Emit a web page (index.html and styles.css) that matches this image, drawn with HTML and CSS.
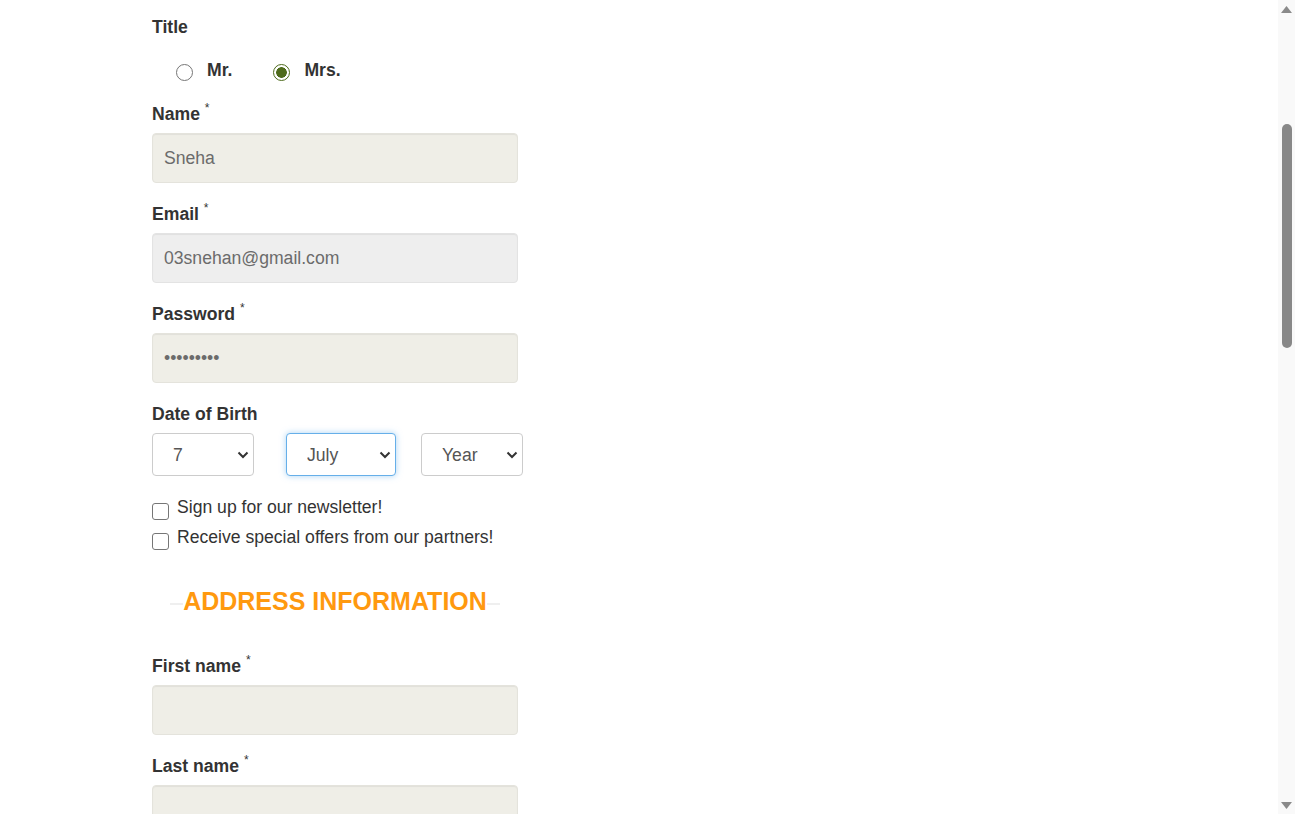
FILE: index.html
```html
<!DOCTYPE html>
<html lang="en">
<head>
<meta charset="utf-8">
<title>Create an account</title>
<link rel="stylesheet" href="styles.css">
</head>
<body>
<div class="page">
  <main class="content">
    <form class="account-form">
      <div class="form-group title-group">
        <label class="field-label">Title</label>
        <div class="radio-row">
          <label class="radio-option first"><input type="radio" name="gender" class="radio"><span>Mr.</span></label>
          <label class="radio-option"><input type="radio" name="gender" class="radio" checked><span>Mrs.</span></label>
        </div>
      </div>

      <div class="form-group">
        <label class="field-label">Name <sup class="req">*</sup></label>
        <input class="text-input" type="text" value="Sneha">
      </div>

      <div class="form-group">
        <label class="field-label">Email <sup class="req">*</sup></label>
        <input class="text-input readonly" type="text" value="03snehan@gmail.com" readonly>
      </div>

      <div class="form-group">
        <label class="field-label">Password <sup class="req">*</sup></label>
        <input class="text-input" type="password" value="123456789">
      </div>

      <div class="form-group dob-group">
        <label class="field-label">Date of Birth</label>
        <div class="select-row">
          <div class="select-wrap day">
            <select class="select"><option>7</option></select>
            <svg class="chevron" width="12" height="8" viewBox="0 0 12 8"><polyline points="1.5,1.5 6,6 10.5,1.5" fill="none" stroke="#333" stroke-width="2"/></svg>
          </div>
          <div class="select-wrap month">
            <select class="select focused"><option>July</option></select>
            <svg class="chevron" width="12" height="8" viewBox="0 0 12 8"><polyline points="1.5,1.5 6,6 10.5,1.5" fill="none" stroke="#333" stroke-width="2"/></svg>
          </div>
          <div class="select-wrap year">
            <select class="select"><option>Year</option></select>
            <svg class="chevron" width="12" height="8" viewBox="0 0 12 8"><polyline points="1.5,1.5 6,6 10.5,1.5" fill="none" stroke="#333" stroke-width="2"/></svg>
          </div>
        </div>
      </div>

      <div class="check-row">
        <input type="checkbox" class="checkbox"><span>Sign up for our newsletter!</span>
      </div>
      <div class="check-row">
        <input type="checkbox" class="checkbox"><span>Receive special offers from our partners!</span>
      </div>

      <h2 class="section-title"><span>ADDRESS INFORMATION</span></h2>

      <div class="form-group">
        <label class="field-label">First name <sup class="req">*</sup></label>
        <input class="text-input" type="text" value="">
      </div>

      <div class="form-group">
        <label class="field-label">Last name <sup class="req">*</sup></label>
        <input class="text-input" type="text" value="">
      </div>
    </form>
  </main>
  <aside class="scrollbar">
    <svg class="arrow" width="17" height="17" viewBox="0 0 17 17"><polygon points="3,13 8.5,6 14,13" fill="#8a8a8a"/></svg>
    <div class="track">
      <div class="thumb"></div>
    </div>
    <svg class="arrow" width="17" height="17" viewBox="0 0 17 17"><polygon points="3,5 8.5,12 14,5" fill="#8a8a8a"/></svg>
  </aside>
</div>
</body>
</html>
```

FILE: styles.css
```css
html, body {
  margin: 0;
  padding: 0;
  height: 100%;
  overflow: hidden;
  background: #fff;
}

body {
  font-family: "Liberation Sans", Arial, sans-serif;
  font-size: 17.6px;
  color: #333;
}

.page {
  display: flex;
  height: 814px;
}

.content {
  flex: 1;
  min-width: 0;
  overflow: hidden;
}

.account-form {
  width: 366px;
  margin-left: 152px;
  padding-top: 13px;
  display: flex;
  flex-direction: column;
}

.form-group {
  display: flex;
  flex-direction: column;
  margin-bottom: 17px;
}

.field-label {
  display: block;
  font-weight: bold;
  line-height: 25px;
  padding-top: 2px;
  margin-bottom: 6px;
  white-space: nowrap;
}

.req {
  font-size: 12px;
  font-weight: normal;
  vertical-align: top;
  position: relative;
  top: -6px;
  margin-left: 0;
}

.title-group .field-label {
  margin-bottom: 18px;
}

.radio-row {
  display: flex;
  align-items: center;
  height: 25px;
}

.radio-option {
  display: inline-flex;
  align-items: center;
  gap: 14px;
  font-weight: bold;
  margin-left: 41px;
  line-height: 25px;
}

.radio-option.first {
  margin-left: 24px;
}

.radio {
  appearance: none;
  -webkit-appearance: none;
  margin: 4px 0 0 0;
  width: 17px;
  height: 17px;
  border: 1px solid #767676;
  border-radius: 50%;
  background: #fff;
  box-sizing: border-box;
  flex: none;
}

.radio:checked {
  border: 1.5px solid #4e6b1c;
  background: radial-gradient(circle, #4e6b1c 0 5px, #fff 5.6px);
}

.text-input {
  box-sizing: border-box;
  width: 366px;
  height: 50px;
  padding: 0 11px;
  border: 1px solid #e4e3dc;
  border-radius: 4px;
  background: #efeee7;
  box-shadow: inset 0 1px 1px rgba(0, 0, 0, 0.06);
  font-family: "Liberation Sans", Arial, sans-serif;
  font-size: 17.6px;
  color: #6b6b6b;
  outline: none;
}

.text-input.readonly {
  background: #eeeeee;
  border-color: #e3e3e3;
}

.dob-group {
  margin-bottom: 19px;
}

.select-row {
  display: flex;
  align-items: center;
}

.select-wrap {
  position: relative;
  flex: none;
  height: 43px;
}

.select-wrap.day {
  width: 102px;
  margin-right: 32px;
}

.select-wrap.month {
  width: 110px;
  margin-right: 25px;
}

.select-wrap.year {
  width: 102px;
}

.select {
  appearance: none;
  -webkit-appearance: none;
  box-sizing: border-box;
  width: 100%;
  height: 43px;
  padding: 0 24px 0 20px;
  border: 1px solid #cccccc;
  border-radius: 4px;
  background-color: #fff;
  font-family: "Liberation Sans", Arial, sans-serif;
  font-size: 17.6px;
  color: #555;
  outline: none;
}

.select.focused {
  border-color: #66afe9;
  box-shadow: 0 0 6px rgba(102, 175, 233, 0.55);
}

.chevron {
  position: absolute;
  right: 5px;
  top: 18px;
  pointer-events: none;
}

.check-row {
  display: flex;
  align-items: flex-start;
  gap: 8px;
  line-height: 25px;
  margin-bottom: 5px;
  white-space: nowrap;
}

.checkbox {
  appearance: none;
  -webkit-appearance: none;
  margin: 8px 0 0 0;
  width: 17px;
  height: 17px;
  box-sizing: border-box;
  border: 1px solid #767676;
  border-radius: 3px;
  background: #fff;
  flex: none;
}

.section-title {
  display: flex;
  align-items: center;
  justify-content: center;
  margin: 31px 0 36px 0;
  height: 30px;
  font-size: 25px;
  line-height: 30px;
  font-weight: bold;
  color: #ff990f;
  white-space: nowrap;
}

.section-title::before,
.section-title::after {
  content: "";
  width: 13px;
  height: 2px;
  margin-top: 6px;
  background: #efefef;
}

.scrollbar {
  width: 17px;
  flex: none;
  background: #f9f9f9;
  display: flex;
  flex-direction: column;
  align-items: center;
}

.arrow {
  display: block;
  flex: none;
}

.track {
  flex: 1;
  width: 17px;
  display: flex;
  justify-content: center;
}

.thumb {
  width: 10px;
  height: 224px;
  margin-top: 107px;
  background: #888;
  border-radius: 5px;
}
```
